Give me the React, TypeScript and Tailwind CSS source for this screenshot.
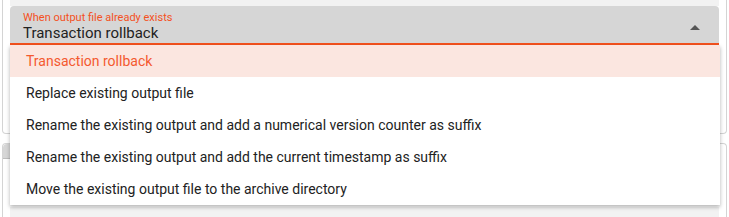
const options = [
  "Transaction rollback",
  "Replace existing output file",
  "Rename the existing output and add a numerical version counter as suffix",
  "Rename the existing output and add the current timestamp as suffix",
  "Move the existing output file to the archive directory",
];

export default function App() {
  const selected = options[0];

  return (
    <div className="relative h-[217px] w-[729px] overflow-hidden bg-white font-['Roboto','Liberation_Sans',sans-serif]">
      <div className="mx-[2px] h-[134px] rounded-b-[4px] border border-t-0 border-[#d4d4d4] px-[7px]">
        <div className="h-[6px] bg-[#f2f2f2]" />
        <div className="relative flex h-[39px] items-center rounded-t-[4px] border-b-2 border-[#f4511e] bg-[#d6d6d6] pl-[13px] pr-[19px]">
          <div className="flex-1 pt-[3px]">
            <p className="text-[11px] leading-[13px] text-[#f4511e]">When output file already exists</p>
            <p className="text-[15px] leading-[18px] text-[#222]">{selected}</p>
          </div>
          <svg width="10" height="5" viewBox="0 0 10 5" className="mt-[6px]">
            <path d="M0 5 L5 0 L10 5 Z" fill="#555" />
          </svg>
        </div>
      </div>

      <div className="mx-[2px] mt-[9px] h-[80px] rounded-t-[4px] border border-b-0 border-[#d4d4d4]">
        <div className="h-[15px] w-[220px] rounded-tl-[4px] border-b border-[#bdbdbd] bg-[#d6d6d6]" />
        <div className="mx-[7px] mt-[48px] h-[20px] bg-[#f2f2f2]" />
      </div>

      <ul className="absolute left-[10px] top-[45px] w-[710px] bg-white shadow-[0_2px_4px_rgba(0,0,0,0.3)]">
        {options.map((o) => (
          <li
            key={o}
            className={
              o === selected
                ? "flex h-[32px] items-center bg-[#fbe6e0] pl-[16px] text-[14px] text-[#f4592f]"
                : "flex h-[32px] items-center pl-[16px] text-[14px] text-[#222]"
            }
          >
            {o}
          </li>
        ))}
      </ul>
    </div>
  );
}
